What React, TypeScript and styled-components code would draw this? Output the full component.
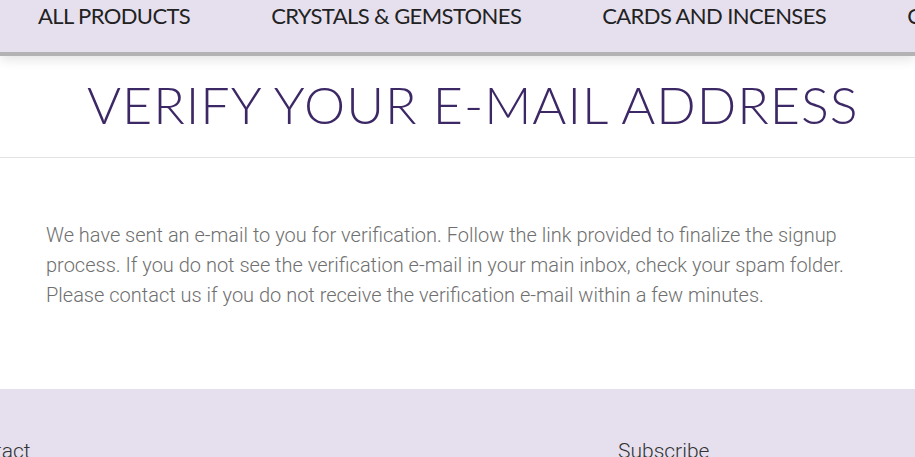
import React from "react";
import styled, { createGlobalStyle } from "styled-components";

const Global = createGlobalStyle`
  html, body { margin: 0; padding: 0; background: #fff; overflow: hidden; }
  body { width: 915px; height: 457px; }
`;

const Page = styled.div`
  width: 915px;
  height: 457px;
  overflow: hidden;
  display: flex;
  flex-direction: column;
`;

const Nav = styled.nav`
  height: 52px;
  flex: none;
  background: #e6e0ee;
  display: flex;
  align-items: flex-start;
  gap: 81px;
  padding-left: 38px;
  white-space: nowrap;
  overflow: hidden;
  border-bottom: 4px solid #b3b3b3;
  position: relative;
  z-index: 1;
  box-shadow: 0 3px 12px rgba(0, 0, 0, 0.12);
`;

const NavItem = styled.a`
  font-family: "Lato", "Open Sans", sans-serif;
  font-size: 22px;
  line-height: 1;
  padding-top: 5px;
  color: #222;
  letter-spacing: -0.6px;
  text-decoration: none;
  flex: none;
`;

const TitleBar = styled.header`
  height: 102px;
  flex: none;
  border-bottom: 1px solid #e3e3e3;
  display: flex;
  align-items: center;
  padding-left: 87px;
  padding-bottom: 5px;
  box-sizing: border-box;
`;

const Title = styled.h1`
  margin: 0;
  font-family: "Lato", sans-serif;
  font-weight: 300;
  font-size: 52px;
  letter-spacing: 1px;
  color: #3d2866;
  line-height: 1;
  white-space: nowrap;
`;

const Content = styled.main`
  height: 231px;
  flex: none;
  padding: 62px 46px 0;
  box-sizing: border-box;
`;

const Text = styled.p`
  margin: 0;
  max-width: 812px;
  font-family: "Roboto", sans-serif;
  font-weight: 300;
  font-size: 20px;
  line-height: 30px;
  color: #6f6f6f;
`;

const Footer = styled.footer`
  flex: 1;
  background: #e6e0ee;
  display: grid;
  grid-template-columns: 659px 1fr;
  padding-top: 50px;
`;

const FooterHeading = styled.h3<{ $shift?: number }>`
  margin: 0 0 0 ${(p) => p.$shift ?? 0}px;
  font-family: "Roboto", sans-serif;
  font-weight: 300;
  font-size: 21px;
  color: #333;
  line-height: 24px;
`;

export default function App() {
  return (
    <>
      <Global />
      <Page>
        <Nav>
          <NavItem>ALL PRODUCTS</NavItem>
          <NavItem>CRYSTALS &amp; GEMSTONES</NavItem>
          <NavItem>CARDS AND INCENSES</NavItem>
          <NavItem>CANDLES</NavItem>
        </Nav>
        <TitleBar>
          <Title>VERIFY YOUR E-MAIL ADDRESS</Title>
        </TitleBar>
        <Content>
          <Text>
            We have sent an e-mail to you for verification. Follow the link provided to finalize the signup
            process. If you do not see the verification e-mail in your main inbox, check your spam folder.
            Please contact us if you do not receive the verification e-mail within a few minutes.
          </Text>
        </Content>
        <Footer>
          <FooterHeading $shift={-42}>Contact</FooterHeading>
          <FooterHeading $shift={-41}>Subscribe</FooterHeading>
        </Footer>
      </Page>
    </>
  );
}
